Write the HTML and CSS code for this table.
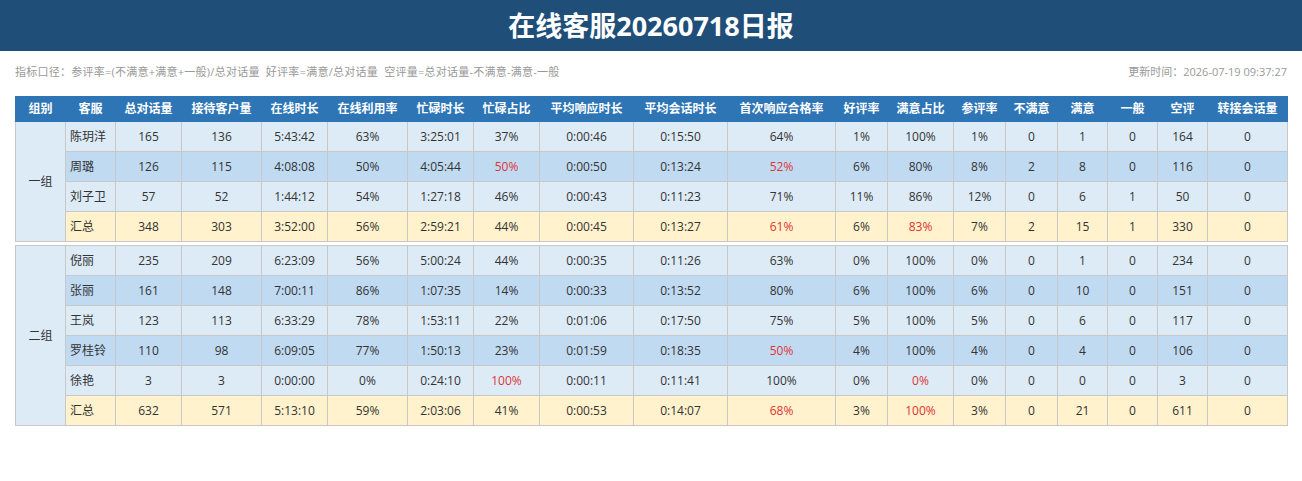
FILE: index.html
```html
<!DOCTYPE html>
<html lang="zh-CN">
<head>
<meta charset="utf-8">
<title>在线客服20260718日报</title>
<link rel="stylesheet" href="styles.css">
</head>
<body>
<header class="topbar"><h1 class="title">在线客服20260718日报</h1></header>
<div class="info">
  <span class="formula">指标口径：参评率=(不满意+满意+一般)/总对话量&nbsp;&nbsp;好评率=满意/总对话量&nbsp;&nbsp;空评量=总对话量-不满意-满意-一般</span>
  <span class="updated">更新时间：2026-07-19 09:37:27</span>
</div>
<table class="report">
  <colgroup>
    <col class="w50"><col class="w50"><col class="w66"><col class="w80"><col class="w66"><col class="w80"><col class="w66"><col class="w66"><col class="w94"><col class="w94"><col class="w108"><col class="w52"><col class="w66"><col class="w52"><col class="w52"><col class="w50"><col class="w50"><col class="w50"><col class="w80">
  </colgroup>
  <thead>
    <tr><th>组别</th><th>客服</th><th>总对话量</th><th>接待客户量</th><th>在线时长</th><th>在线利用率</th><th>忙碌时长</th><th>忙碌占比</th><th>平均响应时长</th><th>平均会话时长</th><th>首次响应合格率</th><th>好评率</th><th>满意占比</th><th>参评率</th><th>不满意</th><th>满意</th><th>一般</th><th>空评</th><th>转接会话量</th></tr>
  </thead>
  <tbody>
    <tr class="light"><td class="group" rowspan="4">一组</td><td class="name">陈玥洋</td><td>165</td><td>136</td><td>5:43:42</td><td>63%</td><td>3:25:01</td><td>37%</td><td>0:00:46</td><td>0:15:50</td><td>64%</td><td>1%</td><td>100%</td><td>1%</td><td>0</td><td>1</td><td>0</td><td>164</td><td>0</td></tr>
    <tr class="dark"><td class="name">周璐</td><td>126</td><td>115</td><td>4:08:08</td><td>50%</td><td>4:05:44</td><td class="red">50%</td><td>0:00:50</td><td>0:13:24</td><td class="red">52%</td><td>6%</td><td>80%</td><td>8%</td><td>2</td><td>8</td><td>0</td><td>116</td><td>0</td></tr>
    <tr class="light"><td class="name">刘子卫</td><td>57</td><td>52</td><td>1:44:12</td><td>54%</td><td>1:27:18</td><td>46%</td><td>0:00:43</td><td>0:11:23</td><td>71%</td><td>11%</td><td>86%</td><td>12%</td><td>0</td><td>6</td><td>1</td><td>50</td><td>0</td></tr>
    <tr class="total"><td class="name">汇总</td><td>348</td><td>303</td><td>3:52:00</td><td>56%</td><td>2:59:21</td><td>44%</td><td>0:00:45</td><td>0:13:27</td><td class="red">61%</td><td>6%</td><td class="red">83%</td><td>7%</td><td>2</td><td>15</td><td>1</td><td>330</td><td>0</td></tr>
    <tr class="gap"><td colspan="19"></td></tr>
    <tr class="light"><td class="group" rowspan="6">二组</td><td class="name">倪丽</td><td>235</td><td>209</td><td>6:23:09</td><td>56%</td><td>5:00:24</td><td>44%</td><td>0:00:35</td><td>0:11:26</td><td>63%</td><td>0%</td><td>100%</td><td>0%</td><td>0</td><td>1</td><td>0</td><td>234</td><td>0</td></tr>
    <tr class="dark"><td class="name">张丽</td><td>161</td><td>148</td><td>7:00:11</td><td>86%</td><td>1:07:35</td><td>14%</td><td>0:00:33</td><td>0:13:52</td><td>80%</td><td>6%</td><td>100%</td><td>6%</td><td>0</td><td>10</td><td>0</td><td>151</td><td>0</td></tr>
    <tr class="light"><td class="name">王岚</td><td>123</td><td>113</td><td>6:33:29</td><td>78%</td><td>1:53:11</td><td>22%</td><td>0:01:06</td><td>0:17:50</td><td>75%</td><td>5%</td><td>100%</td><td>5%</td><td>0</td><td>6</td><td>0</td><td>117</td><td>0</td></tr>
    <tr class="dark"><td class="name">罗桂铃</td><td>110</td><td>98</td><td>6:09:05</td><td>77%</td><td>1:50:13</td><td>23%</td><td>0:01:59</td><td>0:18:35</td><td class="red">50%</td><td>4%</td><td>100%</td><td>4%</td><td>0</td><td>4</td><td>0</td><td>106</td><td>0</td></tr>
    <tr class="light"><td class="name">徐艳</td><td>3</td><td>3</td><td>0:00:00</td><td>0%</td><td>0:24:10</td><td class="red">100%</td><td>0:00:11</td><td>0:11:41</td><td>100%</td><td>0%</td><td class="red">0%</td><td>0%</td><td>0</td><td>0</td><td>0</td><td>3</td><td>0</td></tr>
    <tr class="total"><td class="name">汇总</td><td>632</td><td>571</td><td>5:13:10</td><td>59%</td><td>2:03:06</td><td>41%</td><td>0:00:53</td><td>0:14:07</td><td class="red">68%</td><td>3%</td><td class="red">100%</td><td>3%</td><td>0</td><td>21</td><td>0</td><td>611</td><td>0</td></tr>
  </tbody>
</table>
</body>
</html>
```

FILE: styles.css
```css
html, body {
  margin: 0;
  padding: 0;
  background: #ffffff;
}

body {
  font-family: "Open Sans", "Noto Sans CJK SC", sans-serif;
  color: #333333;
}

.topbar {
  background: #1f4e79;
  height: 51px;
}

.title {
  margin: 0;
  text-align: center;
  color: #ffffff;
  font-size: 27px;
  font-weight: 700;
  line-height: 52px;
  font-family: "Open Sans", "Noto Sans CJK SC", sans-serif;
}

.info {
  display: flex;
  justify-content: space-between;
  padding: 9px 15px 0 15px;
  height: 24px;
  line-height: 24px;
  font-size: 11px;
  color: #999999;
}

.formula {
  letter-spacing: 0.25px;
}

.report {
  margin: 12px 15px 0 15px;
  width: 1272px;
  border-collapse: collapse;
  table-layout: fixed;
  font-size: 12px;
}

.w50 { width: 50px; }
.w52 { width: 52px; }
.w66 { width: 66px; }
.w80 { width: 80px; }
.w94 { width: 94px; }
.w108 { width: 108px; }

.report th {
  background: #2e75b6;
  color: #ffffff;
  font-weight: 700;
  line-height: 24px;
  padding: 0;
  border: 1px solid #2e75b6;
  text-align: center;
  white-space: nowrap;
}

.report td {
  line-height: 29px;
  padding: 0;
  border: 1px solid #c8c8c8;
  text-align: center;
  white-space: nowrap;
}

.report .light td { background: #ddebf7; }
.report .dark td { background: #c0daf2; }
.report .total td { background: #fff2cc; }
.report td.group { background: #ddebf7; }

.report td.name {
  text-align: left;
  padding-left: 4px;
}

.report td.red { color: #e03434; }

.report .gap td {
  height: 3px;
  line-height: 0;
  padding: 0;
  background: #ffffff;
  border-left: none;
  border-right: none;
  border-top: none;
  border-bottom: none;
}
```
